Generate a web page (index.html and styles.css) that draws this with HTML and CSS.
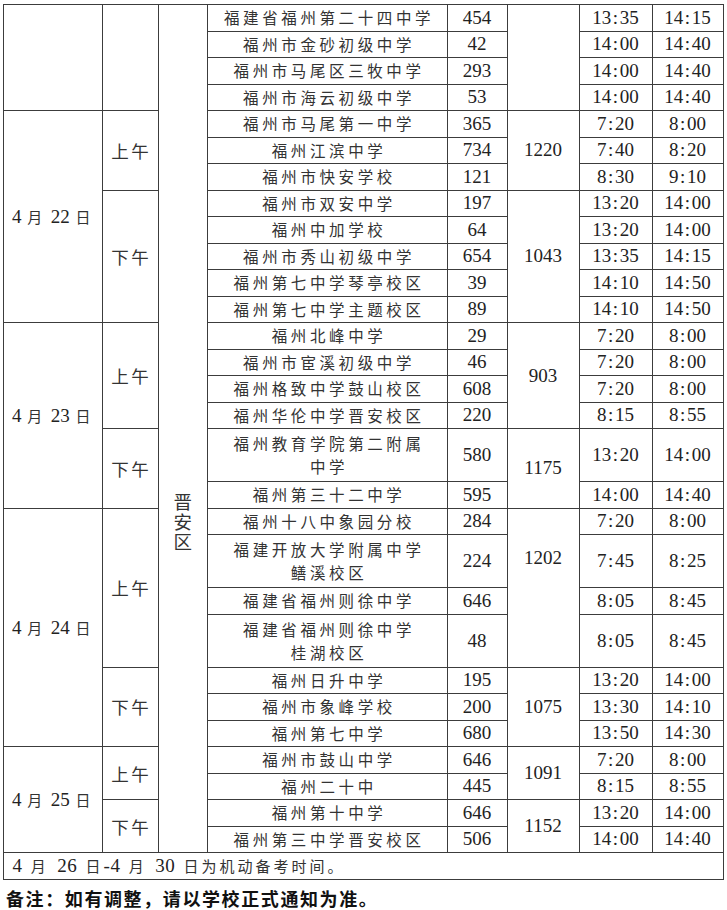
FILE: index.html
```html
<!DOCTYPE html>
<html lang="zh-CN">
<head>
<meta charset="utf-8">
<title>考试安排</title>
<link rel="stylesheet" href="styles.css">
</head>
<body>
<table class="sched">
<colgroup>
<col class="c-date"><col class="c-ap"><col class="c-dist"><col class="c-school"><col class="c-cnt"><col class="c-tot"><col class="c-t1"><col class="c-t2">
</colgroup>
<tbody>
<tr>
<td rowspan="4"></td><td rowspan="4"></td><td rowspan="29" class="dist"><span class="vt">晋安区</span></td>
<td class="sc">福建省福州第二十四中学</td><td class="num">454</td><td rowspan="4"></td><td class="num">13<i>:</i>35</td><td class="num">14<i>:</i>15</td>
</tr>
<tr><td class="sc">福州市金砂初级中学</td><td class="num">42</td><td class="num">14<i>:</i>00</td><td class="num">14<i>:</i>40</td></tr>
<tr><td class="sc">福州市马尾区三牧中学</td><td class="num">293</td><td class="num">14<i>:</i>00</td><td class="num">14<i>:</i>40</td></tr>
<tr><td class="sc">福州市海云初级中学</td><td class="num">53</td><td class="num">14<i>:</i>00</td><td class="num">14<i>:</i>40</td></tr>

<tr>
<td rowspan="8" class="date"><span class="n">4</span> 月 <span class="n">22</span> 日</td><td rowspan="3" class="ap">上午</td>
<td class="sc">福州市马尾第一中学</td><td class="num">365</td><td rowspan="3" class="num">1220</td><td class="num">7<i>:</i>20</td><td class="num">8<i>:</i>00</td>
</tr>
<tr><td class="sc">福州江滨中学</td><td class="num">734</td><td class="num">7<i>:</i>40</td><td class="num">8<i>:</i>20</td></tr>
<tr><td class="sc">福州市快安学校</td><td class="num">121</td><td class="num">8<i>:</i>30</td><td class="num">9<i>:</i>10</td></tr>
<tr>
<td rowspan="5" class="ap">下午</td>
<td class="sc">福州市双安中学</td><td class="num">197</td><td rowspan="5" class="num">1043</td><td class="num">13<i>:</i>20</td><td class="num">14<i>:</i>00</td>
</tr>
<tr><td class="sc">福州中加学校</td><td class="num">64</td><td class="num">13<i>:</i>20</td><td class="num">14<i>:</i>00</td></tr>
<tr><td class="sc">福州市秀山初级中学</td><td class="num">654</td><td class="num">13<i>:</i>35</td><td class="num">14<i>:</i>15</td></tr>
<tr><td class="sc">福州第七中学琴亭校区</td><td class="num">39</td><td class="num">14<i>:</i>10</td><td class="num">14<i>:</i>50</td></tr>
<tr><td class="sc">福州第七中学主题校区</td><td class="num">89</td><td class="num">14<i>:</i>10</td><td class="num">14<i>:</i>50</td></tr>

<tr>
<td rowspan="6" class="date"><span class="n">4</span> 月 <span class="n">23</span> 日</td><td rowspan="4" class="ap">上午</td>
<td class="sc">福州北峰中学</td><td class="num">29</td><td rowspan="4" class="num">903</td><td class="num">7<i>:</i>20</td><td class="num">8<i>:</i>00</td>
</tr>
<tr><td class="sc">福州市宦溪初级中学</td><td class="num">46</td><td class="num">7<i>:</i>20</td><td class="num">8<i>:</i>00</td></tr>
<tr><td class="sc">福州格致中学鼓山校区</td><td class="num">608</td><td class="num">7<i>:</i>20</td><td class="num">8<i>:</i>00</td></tr>
<tr><td class="sc">福州华伦中学晋安校区</td><td class="num">220</td><td class="num">8<i>:</i>15</td><td class="num">8<i>:</i>55</td></tr>
<tr class="dbl">
<td rowspan="2" class="ap">下午</td>
<td class="sc">福州教育学院第二附属<br>中学</td><td class="num">580</td><td rowspan="2" class="num">1175</td><td class="num">13<i>:</i>20</td><td class="num">14<i>:</i>00</td>
</tr>
<tr><td class="sc">福州第三十二中学</td><td class="num">595</td><td class="num">14<i>:</i>00</td><td class="num">14<i>:</i>40</td></tr>

<tr>
<td rowspan="7" class="date"><span class="n">4</span> 月 <span class="n">24</span> 日</td><td rowspan="4" class="ap">上午</td>
<td class="sc">福州十八中象园分校</td><td class="num">284</td><td rowspan="4" class="num tot-high">1202</td><td class="num">7<i>:</i>20</td><td class="num">8<i>:</i>00</td>
</tr>
<tr class="dbl"><td class="sc">福建开放大学附属中学<br>鳝溪校区</td><td class="num">224</td><td class="num">7<i>:</i>45</td><td class="num">8<i>:</i>25</td></tr>
<tr><td class="sc">福建省福州则徐中学</td><td class="num">646</td><td class="num">8<i>:</i>05</td><td class="num">8<i>:</i>45</td></tr>
<tr class="dbl"><td class="sc">福建省福州则徐中学<br>桂湖校区</td><td class="num">48</td><td class="num">8<i>:</i>05</td><td class="num">8<i>:</i>45</td></tr>
<tr>
<td rowspan="3" class="ap">下午</td>
<td class="sc">福州日升中学</td><td class="num">195</td><td rowspan="3" class="num">1075</td><td class="num">13<i>:</i>20</td><td class="num">14<i>:</i>00</td>
</tr>
<tr><td class="sc">福州市象峰学校</td><td class="num">200</td><td class="num">13<i>:</i>30</td><td class="num">14<i>:</i>10</td></tr>
<tr><td class="sc">福州第七中学</td><td class="num">680</td><td class="num">13<i>:</i>50</td><td class="num">14<i>:</i>30</td></tr>

<tr>
<td rowspan="4" class="date"><span class="n">4</span> 月 <span class="n">25</span> 日</td><td rowspan="2" class="ap">上午</td>
<td class="sc">福州市鼓山中学</td><td class="num">646</td><td rowspan="2" class="num">1091</td><td class="num">7<i>:</i>20</td><td class="num">8<i>:</i>00</td>
</tr>
<tr><td class="sc">福州二十中</td><td class="num">445</td><td class="num">8<i>:</i>15</td><td class="num">8<i>:</i>55</td></tr>
<tr>
<td rowspan="2" class="ap">下午</td>
<td class="sc">福州第十中学</td><td class="num">646</td><td rowspan="2" class="num">1152</td><td class="num">13<i>:</i>20</td><td class="num">14<i>:</i>00</td>
</tr>
<tr><td class="sc">福州第三中学晋安校区</td><td class="num">506</td><td class="num">14<i>:</i>00</td><td class="num">14<i>:</i>40</td></tr>

<tr><td colspan="8" class="foot"><span class="n">4</span> 月 <span class="n">26</span> 日<span class="n">-4</span> 月 <span class="n">30</span> 日为机动备考时间。</td></tr>
</tbody>
</table>
<p class="note">备注：如有调整，请以学校正式通知为准。</p>
</body>
</html>
```

FILE: styles.css
```css
html, body {
  margin: 0;
  padding: 0;
  background: #ffffff;
}

body {
  color: #2a2a2a;
  font-family: "Liberation Serif", "Noto Sans CJK SC", serif;
}

.sched {
  border-collapse: collapse;
  table-layout: fixed;
  width: 720px;
  margin: 4px 0 0 2.5px;
}

.c-date { width: 99px; }
.c-ap { width: 56px; }
.c-dist { width: 49.5px; }
.c-school { width: 239.5px; }
.c-cnt { width: 60px; }
.c-tot { width: 72px; }
.c-t1 { width: 73px; }
.c-t2 { width: 71px; }

.sched tr {
  height: 26.5px;
}

.sched tr.dbl {
  height: 53px;
}

.sched td {
  border: 1px solid #3c3c3c;
  padding: 0;
  text-align: center;
  vertical-align: middle;
  line-height: 23px;
  font-size: 16px;
  overflow: hidden;
}

.sched td.sc {
  font-family: "Noto Sans CJK SC", sans-serif;
  font-size: 15.5px;
  letter-spacing: 3.6px;
  padding-left: 3.6px;
  color: #333;
}

.sched td.num {
  font-family: "Liberation Serif", serif;
  font-size: 19px;
  line-height: 22px;
  color: #222;
}

.sched td.num i {
  font-style: normal;
  margin: 0 1.5px;
}

.sched td.ap {
  font-family: "Noto Sans CJK SC", sans-serif;
  font-size: 17.5px;
  letter-spacing: 2.5px;
  padding-left: 2.5px;
  color: #333;
}

.sched td.date {
  font-family: "Noto Sans CJK SC", sans-serif;
  font-size: 15px;
  letter-spacing: 2.5px;
  color: #333;
}

.n {
  font-family: "Liberation Serif", serif;
  font-size: 19px;
  letter-spacing: 0;
  color: #222;
}

.sched td.dist {
  vertical-align: top;
  padding-top: 488px;
  font-family: "Noto Sans CJK SC", sans-serif;
  font-size: 18.5px;
  line-height: 22px;
  color: #333;
}

.vt {
  writing-mode: vertical-rl;
  text-orientation: upright;
  letter-spacing: 1.5px;
}

.sched td.tot-high {
  vertical-align: top;
  padding-top: 38px;
}

.sched td.foot {
  text-align: left;
  padding-left: 9px;
  font-family: "Noto Sans CJK SC", sans-serif;
  font-size: 15px;
  letter-spacing: 3px;
  word-spacing: 2px;
  color: #333;
}

.sched td.foot .n {
  letter-spacing: 0.5px;
}

.note {
  margin: 5px 0 0 6px;
  font-family: "Noto Sans CJK SC", sans-serif;
  font-size: 18px;
  font-weight: 700;
  letter-spacing: 1.6px;
  line-height: 26px;
  color: #111;
}
```
